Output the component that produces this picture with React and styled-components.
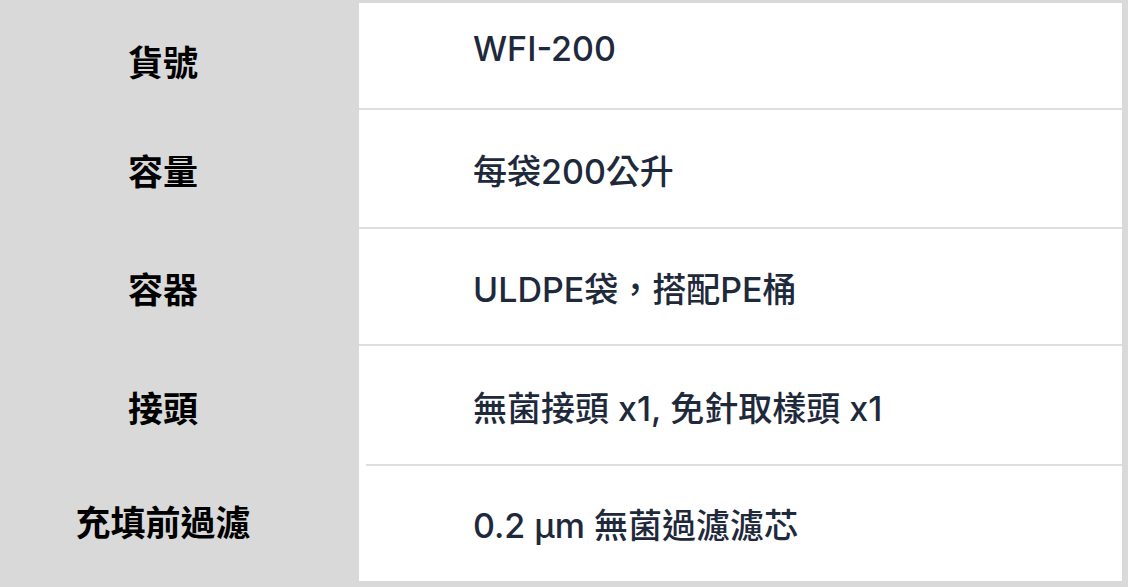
import React from 'react';
import styled, { createGlobalStyle } from 'styled-components';

const GlobalStyle = createGlobalStyle`
  html, body {
    margin: 0;
    padding: 0;
    background: #d9d9d9;
  }
`;

const Page = styled.div`
  width: 1128px;
  height: 587px;
  box-sizing: border-box;
  padding: 3px 6px 0 0;
  background: #d9d9d9;
  overflow: hidden;
`;

const Table = styled.div`
  display: flex;
  flex-direction: column;
`;

const Row = styled.div`
  display: grid;
  grid-template-columns: 359px 1fr;
  height: ${p => p.h}px;
`;

const Label = styled.div`
  display: flex;
  align-items: center;
  justify-content: center;
  padding-right: 33px;
  font-family: "Noto Sans CJK TC", "Noto Sans", sans-serif;
  font-weight: 700;
  font-size: 35px;
  color: #000;

  span {
    transform: translateY(${p => p.shift}px);
  }
`;

const Value = styled.div`
  position: relative;
  display: flex;
  align-items: center;
  box-sizing: border-box;
  padding: 0 0 ${p => p.lift}px 114px;
  background: #fff;
  font-family: Inter, "Noto Sans CJK TC", sans-serif;
  font-weight: 500;
  font-size: 34px;
  color: #1e293b;

  &::after {
    content: '';
    display: ${p => (p.last ? 'none' : 'block')};
    position: absolute;
    left: ${p => p.lineInset}px;
    right: 0;
    bottom: 0;
    height: 2px;
    background: #dedede;
  }
`;

const rows = [
  { label: '貨號', value: 'WFI-200', h: 107, lift: 16, shift: 4 },
  { label: '容量', value: '每袋200公升', h: 119, lift: 0, shift: 0 },
  { label: '容器', value: 'ULDPE袋，搭配PE桶', h: 117, lift: 0, shift: 0 },
  { label: '接頭', value: '無菌接頭 x1, 免針取樣頭 x1', h: 120, lift: 0, shift: 0, inset: 7 },
  { label: '充填前過濾', value: '0.2 μm 無菌過濾濾芯', h: 115, lift: 0, shift: -3 },
];

export default function App() {
  return (
    <Page>
      <GlobalStyle />
      <Table>
        {rows.map((r, i) => (
          <Row key={r.label} h={r.h}>
            <Label shift={r.shift}>
              <span>{r.label}</span>
            </Label>
            <Value lift={r.lift} lineInset={r.inset || 0} last={i === rows.length - 1}>
              {r.value}
            </Value>
          </Row>
        ))}
      </Table>
    </Page>
  );
}
